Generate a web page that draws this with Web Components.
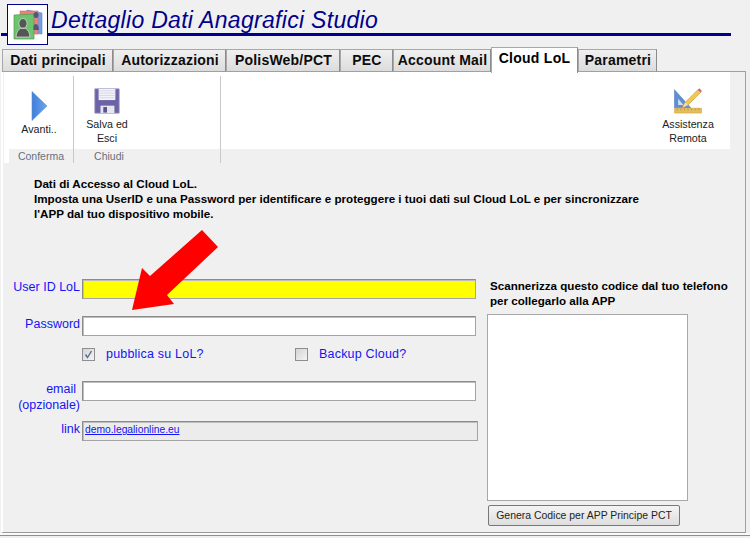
<!DOCTYPE html>
<html lang="it"><head><meta charset="utf-8"><title>Dettaglio Dati Anagrafici Studio</title>
<style>
html,body{margin:0;padding:0;background:#f0f0f0}
body{width:750px;height:538px;overflow:hidden;font-family:"Liberation Sans",Arial,sans-serif}
</style></head><body>
<x-window>
  <x-title slot="title">Dettaglio Dati Anagrafici Studio</x-title>
  <x-tabs slot="tabs">
    <x-tab w="111">Dati principali</x-tab><x-tab w="113">Autorizzazioni</x-tab><x-tab w="114">PolisWeb/PCT</x-tab><x-tab w="53">PEC</x-tab><x-tab w="98">Account Mail</x-tab><x-tab w="87" selected>Cloud LoL</x-tab><x-tab w="79">Parametri</x-tab>
  </x-tabs>
  <x-toolbar slot="toolbar">
    <x-group w="70" label="Conferma" lw="69" inset="5"><x-tool icon="next" top="19" gap="1" w="60">Avanti..</x-tool></x-group>
    <x-group w="147" label="Chiudi" lw="70"><x-tool icon="save" top="16" gap="3" w="66">Salva ed<br>Esci</x-tool></x-group>
    <x-group grow end><x-tool icon="tool" top="15" gap="3" w="84">Assistenza<br>Remota</x-tool></x-group>
  </x-toolbar>
  <x-cloud-form slot="content">
    <span slot="intro">Dati di Accesso al Cloud LoL.<br>Imposta una UserID e una Password per identificare e proteggere i tuoi dati sul Cloud LoL e per sincronizzare<br>l'APP dal tuo dispositivo mobile.</span>
    <x-field top="0" yellow>User ID LoL</x-field>
    <x-field top="17">Password</x-field>
    <x-checks></x-checks>
    <x-field top="20" multi><span style="padding-right:4px">email</span><br>(opzionale)</x-field>
    <x-field top="20" link>link</x-field>
    <x-qr slot="side"></x-qr>
  </x-cloud-form>
  <x-arrow slot="overlay"></x-arrow>
</x-window>
<script>
function def(name, css, html, init){
  customElements.define(name, class extends HTMLElement{
    connectedCallback(){
      if(this.shadowRoot) return;
      const r=this.attachShadow({mode:'open'});
      r.innerHTML='<style>'+css+'</style>'+(typeof html==='function'?html(this):html);
      if(init) init(this,r);
    }
  });
}
const ICONS={
next:'<svg width="17" height="30" viewBox="0 0 17 30"><defs><linearGradient id="n" x1="0" x2="1" y1="0" y2="0"><stop offset="0" stop-color="#3f7fd8"/><stop offset="1" stop-color="#6ea6ee"/></linearGradient></defs><path d="M1 .5 16 15 1 29.500Z" fill="url(#n)" stroke="#5b8fd6" stroke-width=".6"/></svg>',
save:'<svg width="26" height="26" viewBox="0 0 28 28"><path d="M1 1h26v26H1z" fill="#6b63a8"/><path d="M1 1h26v26H1z" fill="none" stroke="#8a84bb"/><path d="M5 1h18v12H5z" fill="#f4f4f8"/><path d="M5 3h18M5 5.500h18M5 8h18M5 10.500h18" stroke="#cfcde0" stroke-width=".8"/><path d="M7 19h15v8H7z" fill="#e6e6ee"/><path d="M10 20.500h4v6h-4z" fill="#5a5396"/></svg>',
tool:'<svg width="30" height="27" viewBox="0 0 32 30"><path d="M1 3 19 23H1Z" fill="#5f8fd2"/><path d="M5 13 11 20H5Z" fill="#cfe0f6"/><path d="M1 3 19 23H1Z" fill="none" stroke="#4a78ba" stroke-width=".6"/><path d="M9 23 13 17 27 3l3 3L16 20Z" fill="#f2c94e" stroke="#b98f2c" stroke-width=".6"/><path d="M13 17l3 3-6 3Z" fill="#f3dcb0"/><path d="M27 3l1.500-1.500 3 3L30 6Z" fill="#d8606a"/><path d="M1 23.500h30V29H1z" fill="#e5bd5c" stroke="#c2973c" stroke-width=".5"/><path d="M4 24v2M8 24v2M12 24v2M16 24v2M20 24v2M24 24v2M28 24v2" stroke="#9a7a2a" stroke-width=".6"/></svg>'
};
def('x-window',':host{display:block;position:relative;width:750px;height:538px;overflow:hidden}.panel{margin-left:1px;width:745px;height:462px;box-sizing:border-box;border:1px solid #a0a0a0;border-left:2px solid #fff;border-bottom:1px solid #9a9a9a;position:relative;background:#f0f0f0;margin-top:-1px}.foot{height:2px;background:#fafafa}.foot2{height:1px;background:#8d8d8d}',
'<slot name="title"></slot><slot name="tabs"></slot><div class="panel"><slot name="toolbar"></slot><slot name="content"></slot></div><div class="foot"></div><div class="foot2"></div><slot name="overlay"></slot>');

def('x-title',':host{display:flex;height:47px;box-sizing:border-box;padding:4px 0 0 7px;background:linear-gradient(#00008b,#00008b) 1px 33px/730px 3px no-repeat}.logo{width:39px;height:39px;border:1px solid #00008b;background:#fff;flex:none;display:flex;align-items:center;justify-content:center}h1{margin:3px 0 0 3px;font:italic 400 23px/26px "Liberation Sans",Arial,sans-serif;color:#00008b;letter-spacing:.3px;white-space:nowrap}',
'<div class="logo"><svg width="32" height="34" viewBox="0 0 32 34"><path d="M15 2 30 5v21l-15-1Z" fill="#6f9fe8" stroke="#5a84c8" stroke-width=".6"/><path d="M8 3h18v23H8Z" fill="#ee8278" stroke="#d86a62" stroke-width=".6"/><path d="M2 7 22 6v25H2Z" fill="#6cc46e" stroke="#4f9c50" stroke-width=".7"/><path d="M24 10a2.500 3 0 1 1 .1 0M27 22c0-4-1.500-6-3-6-1 0-2 .8-2.500 2v4Z" fill="#4e5a78"/><path d="M11 10.500a4 5 0 1 1-.1 0M4 29c.5-6 3.500-9 7-9s6.500 3 7 9Z" fill="#555" stroke="#dfe8df" stroke-width=".7"/></svg></div><h1><slot></slot></h1>');

def('x-tabs',':host{display:flex;align-items:flex-end;height:25px;padding-left:2px;position:relative;z-index:2}','<slot></slot>');

def('x-tab',':host{display:block;box-sizing:border-box;height:23px;padding-left:1px;border:1px solid #a8a8a8;border-bottom:1px solid #a0a0a0;border-right-color:#8c8c8c;background:linear-gradient(#f0f0f0,#dcdcdc);font:700 14px/21px "Liberation Sans",Arial,sans-serif;color:#0c0c0c;text-align:center;white-space:nowrap;letter-spacing:.2px}:host([selected]){height:26px;margin-bottom:-1px;padding-left:0;background:#fff;border-bottom:0;line-height:20px;color:#000;letter-spacing:.28px}',
'<slot></slot>',(el)=>{el.style.width=el.getAttribute('w')+'px';});

def('x-toolbar',':host{display:flex;margin-left:1px;width:726px;height:91px;font:10.700px/14px "Liberation Sans",Arial,sans-serif;color:#222}','<slot></slot>');

def('x-group',':host{display:flex;flex-direction:column;box-sizing:border-box;height:91px;border-right:1px solid #c8c8c8;border-image:linear-gradient(to bottom,#fff 0,#fff 5px,#c8c8c8 5px,#c8c8c8 100%) 1}:host([grow]){flex:1;border-right:0;border-image:none}.body{height:77px;background:#fff;display:flex;flex:none}:host([end]) .body{justify-content:flex-end}.band{flex:1;background:#f0f0f0}.lab{text-align:center;color:#66707e;line-height:15px;font-size:10.500px}',
(el)=>'<div class="body"><slot></slot></div><div class="band"><div class="lab">'+(el.getAttribute('label')||'')+'</div></div>',
(el,r)=>{ if(el.hasAttribute('w')) el.style.width=el.getAttribute('w')+'px'; el.style.flex=el.hasAttribute('grow')?'1':'none';
  const p=+el.getAttribute('inset')||0; if(p){el.style.paddingLeft=p+'px';el.style.background='#fff';}
  if(el.hasAttribute('lw')) r.querySelector('.lab').style.width=(el.getAttribute('lw')-p)+'px'; });

def('x-tool',':host{display:flex;flex-direction:column;align-items:center;text-align:center;box-sizing:content-box}svg{display:block;flex:none}.t{white-space:nowrap}',
(el)=>ICONS[el.getAttribute('icon')]+'<div class="t" style="margin-top:'+el.getAttribute('gap')+'px"><slot></slot></div>',
(el)=>{el.style.width=el.getAttribute('w')+'px';el.style.paddingTop=el.getAttribute('top')+'px';});

def('x-cloud-form',':host{display:block;font:12px/15px "Liberation Sans",Arial,sans-serif}.intro{padding:13px 0 0 31px;height:44px;font-weight:700;font-size:11.630px;color:#000;white-space:nowrap}.row{display:flex;margin-top:59px}.left{width:481px;flex:none}.side{flex:none;margin-left:3px}',
'<div class="intro"><slot name="intro"></slot></div><div class="row"><div class="left"><slot></slot></div><div class="side"><slot name="side"></slot></div></div>');

def('x-field',':host{display:flex;align-items:flex-start;color:#1414f5;font:12.500px/16px "Liberation Sans",Arial,sans-serif}.lab{width:77px;flex:none;text-align:right;white-space:nowrap;height:20px;box-sizing:border-box}.box{margin-left:2px;width:394px;height:20px;box-sizing:border-box;border:1px solid #8c8c8c;border-bottom-color:#a4a4a4;border-right-color:#a4a4a4;box-shadow:inset 1px 1px 0 #bdbdbd;background:#fff}:host([yellow]) .box{background:#ff0}:host([link]) .box{width:396px;background:#ececec;font-size:10.300px;line-height:15px;padding-left:2px;white-space:nowrap}a{color:#1414f5;text-decoration:underline}',
(el)=>'<div class="lab"><slot></slot></div><div class="box">'+(el.hasAttribute('link')?'<a href="#">demo.legalionline.eu</a>':'')+'</div>',
(el)=>{el.style.marginTop=el.getAttribute('top')+'px';});

def('x-checks',':host{display:flex;margin-top:12px;padding-left:79px;height:13px;color:#1414f5;font:12.500px/13px "Liberation Sans",Arial,sans-serif;letter-spacing:.2px}.c{width:13px;height:13px;box-sizing:border-box;border:1px solid #8e8e8e;background:linear-gradient(135deg,#d4d4d4,#f4f4f4);flex:none;display:flex;align-items:center;justify-content:center}.t{margin-left:11px;white-space:nowrap}.a{width:200px;display:flex;flex:none}',
'<div class="a" style="width:213px"><span class="c"><svg width="9" height="9" viewBox="0 0 9 9"><path d="M1.500 4.500 3.500 7.500 7.500 1" fill="none" stroke="#5a6a96" stroke-width="1.400"/></svg></span><span class="t">pubblica su LoL?</span></div><div class="a"><span class="c"></span><span class="t">Backup Cloud?</span></div>');

def('x-qr',':host{display:block;font:700 11.600px/15px "Liberation Sans",Arial,sans-serif;color:#000}.t{padding-left:3px;white-space:nowrap;height:36px;margin-top:-1px}.q{width:201px;height:187px;box-sizing:border-box;border:1px solid #a8a8a8;background:#fff}button{display:block;margin:4px 0 0 1px;width:192px;height:21px;padding:0;border:1px solid #777;border-radius:2px;background:linear-gradient(#f4f4f4,#dedede);font:400 10.450px/18px "Liberation Sans",Arial,sans-serif;color:#222}',
'<div class="t">Scannerizza questo codice dal tuo telefono<br>per collegarlo alla APP</div><div class="q"></div><button>Genera Codice per APP Principe PCT</button>');

def('x-arrow',':host{position:absolute;left:0;top:0;width:750px;height:538px;pointer-events:none;z-index:5}svg{display:block}',
'<svg width="750" height="538"><polygon points="202,230 218,247 167,295 174,304 132,310 142,268 150,276" fill="#ff0000"/></svg>');
</script>
</body></html>
